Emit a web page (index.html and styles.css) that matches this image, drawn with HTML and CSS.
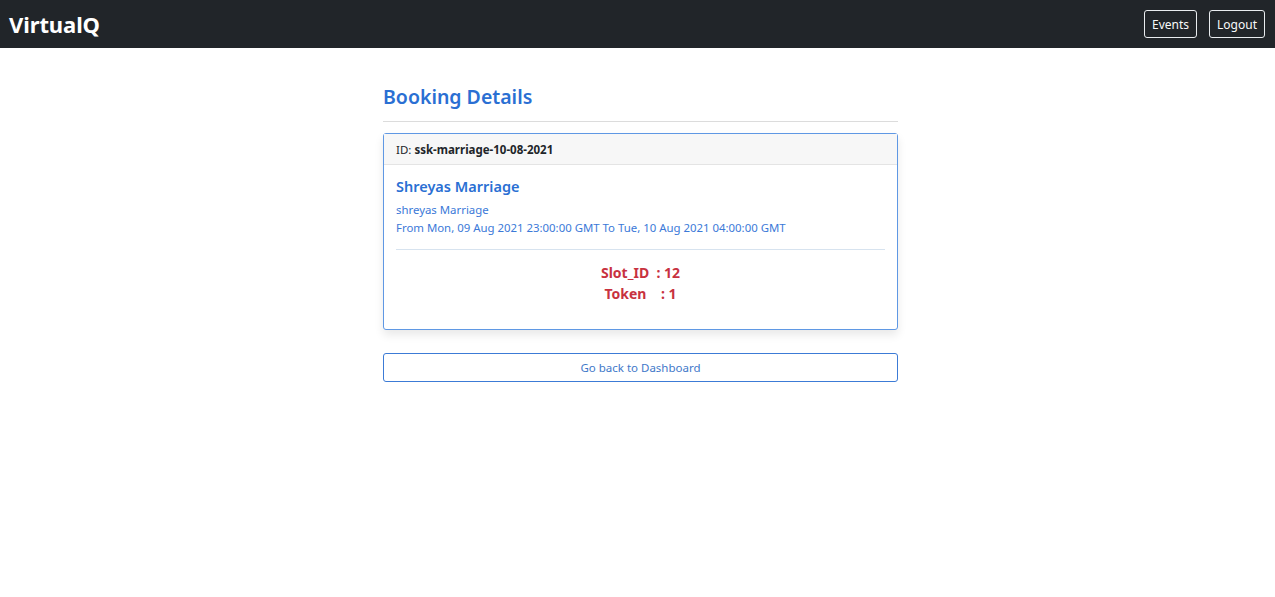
FILE: index.html
```html
<!DOCTYPE html>
<html lang="en">
<head>
<meta charset="utf-8">
<title>VirtualQ</title>
<link rel="stylesheet" href="styles.css">
</head>
<body>
<nav class="navbar">
  <a class="brand" href="#">VirtualQ</a>
  <div class="nav-actions">
    <button class="btn-nav">Events</button>
    <button class="btn-nav">Logout</button>
  </div>
</nav>
<main class="container">
  <h2 class="page-title">Booking Details</h2>
  <hr class="title-rule">
  <section class="card">
    <div class="card-header">ID: <strong>ssk-marriage-10-08-2021</strong></div>
    <div class="card-body">
      <h5 class="card-title">Shreyas Marriage</h5>
      <p class="card-text">shreyas Marriage</p>
      <p class="card-text">From Mon, 09 Aug 2021 23:00:00 GMT To Tue, 10 Aug 2021 04:00:00 GMT</p>
      <hr class="body-rule">
      <div class="slot-info">
        <div>Slot_ID&nbsp; : 12</div>
        <div>Token&nbsp;&nbsp;&nbsp; : 1</div>
      </div>
    </div>
  </section>
  <button class="btn-back">Go back to Dashboard</button>
</main>
</body>
</html>
```
FILE: styles.css
```css
* { box-sizing: border-box; }
body {
  margin: 0;
  font-family: "Noto Sans", "Open Sans", sans-serif;
  background: #fff;
  color: #212529;
}
.navbar {
  height: 48px;
  background: #212529;
  display: flex;
  align-items: center;
  justify-content: space-between;
  padding: 0 10px 0 9px;
}
.brand {
  color: #fff;
  text-decoration: none;
  font-size: 22px;
  font-weight: 700;
  letter-spacing: -0.1px;
}
.nav-actions {
  display: flex;
  gap: 12px;
}
.btn-nav {
  height: 28px;
  padding: 0 7px;
  background: transparent;
  color: #f8f9fa;
  border: 1px solid #e9ecef;
  border-radius: 3px;
  font-family: inherit;
  font-size: 12px;
}
.container {
  width: 515px;
  margin: 0 auto;
  padding-top: 36px;
  position: relative;
  left: 3px;
}
.page-title {
  margin: 0;
  color: #2a6fd3;
  font-size: 19.5px;
  font-weight: 600;
  line-height: 26px;
}
.title-rule {
  margin: 11px 0 11px;
  border: 0;
  border-top: 1px solid #dcdcdc;
}
.card {
  border: 1px solid #5f98e4;
  border-radius: 3px;
  box-shadow: 0 5px 10px rgba(0, 0, 0, 0.09);
  background: #fff;
}
.card-header {
  height: 31px;
  background: #f7f7f7;
  border-bottom: 1px solid #e4e4e4;
  padding: 1px 12px 0;
  display: flex;
  align-items: center;
  font-size: 11.5px;
  gap: 3px;
}
.card-header strong { font-weight: 700; }
.card-body {
  padding: 11px 12px 25px;
}
.card-title {
  margin: 0 0 5px;
  font-size: 14.5px;
  font-weight: 600;
  color: #2a6fd3;
  line-height: 20px;
}
.card-text {
  margin: 0;
  font-size: 11.4px;
  line-height: 18px;
  color: #3b79d8;
}
.body-rule {
  margin: 12px 0 12px;
  border: 0;
  border-top: 1px solid #d7e3ef;
}
.slot-info {
  text-align: center;
  color: #c8323f;
  font-weight: 700;
  font-size: 14px;
  line-height: 21px;
}
.btn-back {
  display: block;
  width: 100%;
  height: 29px;
  margin-top: 23px;
  background: #fff;
  border: 1px solid #3c7bd6;
  border-radius: 3px;
  color: #3f78c9;
  font-family: inherit;
  font-size: 11.5px;
}
```
